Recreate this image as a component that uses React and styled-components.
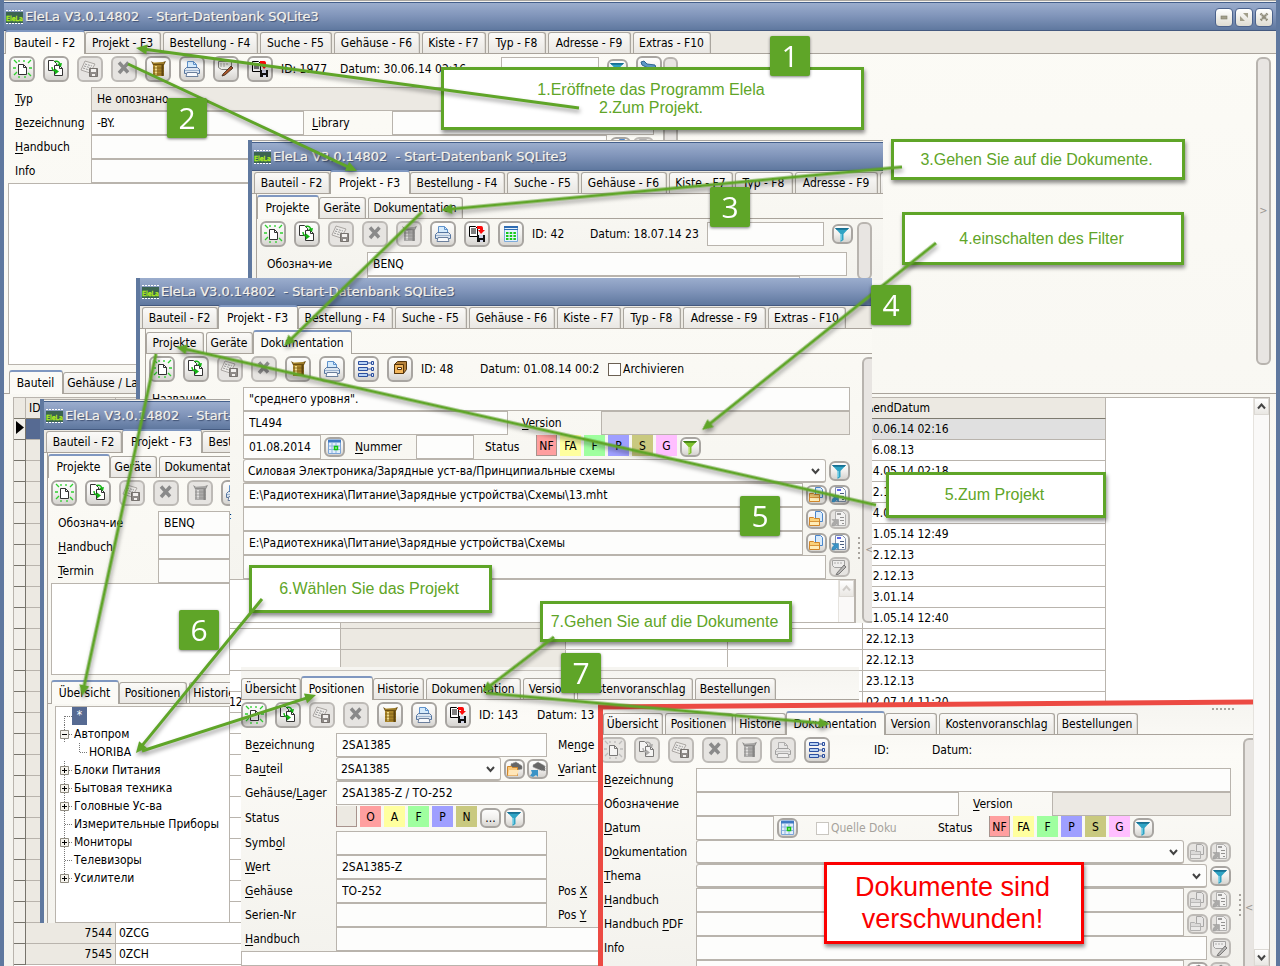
import React, { useId } from "react";
import styled, { createGlobalStyle, css } from "styled-components";

const UI = `"DejaVu Sans Condensed", "DejaVu Sans", "Noto Sans", sans-serif`;
const LINE = "#b9b4ad";
const GREEN = "#5fa528";

const Global = createGlobalStyle`
  *, *::before, *::after { box-sizing: border-box; }
  body { margin: 0; background: #ece9e2; }
  button, input, select, textarea { font: inherit; color: inherit; margin: 0; }
`;

/* ---------- window chrome ---------- */

const Canvas = styled.div`
  position: relative;
  width: 100%;
  height: 100vh;
  min-height: 400px;
  overflow: hidden;
  font: 12px/16px ${UI};
  color: #000;
`;

const Frame = styled.section`
  display: flex;
  flex-direction: column;
  overflow: hidden;
  isolation: isolate;
  border-left: 4px solid #5f789f;
  background: linear-gradient(#fcfbf6, #f4f3ee);
  ${(p) =>
    p.$base
      ? css`
          height: 100%;
          border-right: 4px solid #5f789f;
        `
      : css`
          position: absolute;
          left: ${p.$x}px;
          top: ${p.$y}px;
          width: ${p.$w}px;
          height: ${p.$h}px;
        `}
`;

const TopEdge = styled.div`
  flex: none;
  height: 3px;
  margin-left: -4px;
  margin-right: -4px;
  background: linear-gradient(#a9a6a1 1px, #f4f2ee 1px, #f4f2ee 2px, #445f8b 2px);
`;

const TitleBar = styled.header`
  flex: none;
  display: flex;
  align-items: center;
  gap: 2px;
  height: 28px;
  margin: 0 -4px;
  padding: 1px 7px 0 6px;
  border-bottom: 1px solid #44597f;
  background: linear-gradient(#9badcd, #8296bb 45%, #5f789f);
`;

const TitleText = styled.h1`
  flex: 1;
  margin: 0;
  font: 13px/16px "DejaVu Sans", sans-serif;
  white-space: pre;
  color: #f3f1ea;
  text-shadow: 1px 1px 1px #3c4f73, 0 0 1px #f3f1ea;
`;

const CaptionButton = styled.button`
  width: 18px;
  height: 19px;
  margin-left: 0;
  padding: 0;
  display: grid;
  place-items: center;
  border: 1px solid #4b628c;
  border-radius: 4px;
  background: linear-gradient(#fff, #dedcd2);
`;

const LogoMark = styled.svg`
  flex: none;
`;

function Logo() {
  const dots = [0, 3, 6, 9, 12, 15];
  return (
    <LogoMark width="17" height="15" viewBox="0 0 17 15" role="img" aria-label="EleLa">
      <rect x="0" y="2" width="17" height="11" fill="#3b6450" />
      {dots.map((d) => (
        <g key={d} fill="#fff">
          <rect x={d} y="0" width="2" height="1" />
          <rect x={d} y="13" width="2" height="1" />
        </g>
      ))}
      <text x="8.500" y="10.500" textAnchor="middle" fontSize="7" fontFamily="DejaVu Sans Condensed, DejaVu Sans, sans-serif" stroke="#b6f51c" strokeWidth=".3" fill="#b6f51c">
        EleLa
      </text>
    </LogoMark>
  );
}

function Title({ controls }) {
  return (
    <TitleBar>
      <Logo />
      <TitleText>{"EleLa V3.0.14802  - Start-Datenbank SQLite3"}</TitleText>
      {controls && (
        <>
          <CaptionButton aria-label="Minimieren">
            <svg width="8" height="8"><rect x="1" y="3" width="6" height="3" fill="#a29f8b" stroke="#7f7c6a" strokeWidth=".6" /></svg>
          </CaptionButton>
          <CaptionButton aria-label="Maximieren">
            <svg width="10" height="10"><path d="M4 1h5v5zM1 4v5h5z" fill="#a29f8b" /></svg>
          </CaptionButton>
          <CaptionButton aria-label="Schließen">
            <svg width="10" height="10"><path d="M1.500 1.500l7 7M8.500 1.500l-7 7" stroke="#8f8c7b" strokeWidth="2.400" strokeDasharray="1.600 .4" /></svg>
          </CaptionButton>
        </>
      )}
    </TitleBar>
  );
}

/* ---------- tabs ---------- */

const TabBar = styled.nav`
  flex: none;
  display: flex;
  align-items: flex-end;
  gap: 2px;
  height: ${(p) => (p.$lower ? 29 : p.$sub ? 25 : 23)}px;
  padding-left: ${(p) => p.$pad || 0}px;
  border-bottom: 1px solid #a9a39b;
  background: ${(p) => (p.$plain ? "transparent" : "#ece9e2")};
`;

const Tab = styled.button`
  flex: none;
  width: ${(p) => p.$w}px;
  height: 21px;
  padding: 0 1px 0 0;
  border: 1px solid #aaa69f;
  border-bottom: 0;
  border-radius: 3px 3px 0 0;
  box-shadow: inset -1px 0 0 #dedbd5;
  background: linear-gradient(#fbfaf8, #e9e7e3);
  white-space: nowrap;
  font-size: 12px;
  line-height: 19px;
  ${(p) =>
    p.$active &&
    css`
      width: ${p.$w + 4}px;
      height: 24px;
      margin: 0 -2px -1px;
      border-top: 2px solid #7f97c0;
      background: #fbfaf6;
      line-height: 20px;
      box-shadow: none;
      z-index: 1;
    `}
`;

const MAIN_TABS = [
  ["Bauteil - F2", 76],
  ["Projekt - F3", 76],
  ["Bestellung - F4", 95],
  ["Suche - F5", 72],
  ["Gehäuse - F6", 86],
  ["Kiste - F7", 64],
  ["Typ - F8", 58],
  ["Adresse - F9", 83],
  ["Extras - F10", 78],
];
const PROJECT_TABS = [["Projekte", 58], ["Geräte", 47], ["Dokumentation", 95]];
const DETAIL_TABS = [
  ["Übersicht", 60],
  ["Positionen", 68],
  ["Historie", 51],
  ["Dokumentation", 95],
  ["Version", 52],
  ["Kostenvoranschlag", 116],
  ["Bestellungen", 81],
];

function Tabs({ items, active, ...rest }) {
  return (
    <TabBar {...rest}>
      {items.map(([name, w]) => (
        <Tab key={name} $w={w} $active={name === active}>{name}</Tab>
      ))}
    </TabBar>
  );
}

/* ---------- icons ---------- */

const Svg = styled.svg`
  display: block;
  flex: none;
  ${(p) => p.$off && css`filter: grayscale(1); opacity: 0.6;`}
`;
const Big = ({ off, children }) => <Svg $off={off} width="26" height="26" viewBox="0 0 26 26" fill="none" aria-hidden="true">{children}</Svg>;
const Small = ({ off, children }) => <Svg $off={off} width="21" height="20" viewBox="0 0 21 20" fill="none" aria-hidden="true">{children}</Svg>;

const page = "h5l3 3v7h-8z";
const ICONS = {
  new: (off) => (
    <Big off={off}>
      <path d="M5 4l3 3M10 4v2M15 4v2M19 7l3-3M20 12h3M4 12h3M5 19l3-3M10 20v2M16 20v2M19 17l3 3" stroke="#2fd02f" strokeWidth="1.300" />
      <path d="M9.500 8.500h5l3 3v7h-8z" fill="#fff" stroke="#333" /><path d="M14.500 8.500v3h3" stroke="#333" />
    </Big>
  ),
  copy: (off) => (
    <Big off={off}>
      <path d={`M5.500 4.500${page}`} fill="#fff" stroke="#333" />
      <path d={`M11.500 9.500${page}`} fill="#fff" stroke="#333" /><path d="M16.500 9.500v3h3" stroke="#333" />
      <path d="M11.500 5.500c4-1 5 1 6 4" stroke="#12b312" strokeWidth="1.400" /><path d="M14 8l4 3 1-4z" fill="#12b312" />
      <path d="M9 11c0 3 1 4 4 4" stroke="#12b312" strokeWidth="1.400" /><path d="M12 12.500l4 3-4 3z" fill="#12b312" />
    </Big>
  ),
  save: () => (
    <Big>
      <path d="M8 5l10 3-5 9-9-3z" fill="#eceae7" stroke="#aaa6a2" />
      <path d="M8 8l7 2M7 10l7 2M6 12l6 2" stroke="#999" strokeDasharray="2 1" />
      <path d="M12.500 12.500h8v8h-8z" fill="#8e8a87" stroke="#77736f" /><path d="M14 13h5v3h-5zM15 18h3v2h-3z" fill="#f3f1ef" />
    </Big>
  ),
  remove: () => (
    <Big><path d="M8 6.500l9 10M17.500 6.500L8 17" stroke="#8a8a8a" strokeWidth="3.400" /></Big>
  ),
  trash: (off) => (
    <Big off={off}>
      <path d="M8 9h11v11H8z" fill="#a8842a" /><path d="M6 5l3 2 9-1 3-1-2 4H8z" fill="#6b4f10" /><path d="M8 7h11" stroke="#caa640" />
      <path d="M11 10v9" stroke="#f1db8a" strokeWidth="2" /><path d="M8 12h11M8 15h11M8 18h11" stroke="#7a5c14" strokeWidth=".8" /><path d="M17.500 9v11" stroke="#5e4510" strokeWidth="2" />
    </Big>
  ),
  print: (off) => (
    <Big off={off}>
      <path d="M8.500 5.500h6l3 3v5h-9z" fill="#d6ebfc" stroke="#5f92cc" /><path d="M14.500 5.500v3h3" stroke="#5f92cc" />
      <path d="M5.500 13.500l2-2h11l2 2v4h-15z" fill="#dde6f0" stroke="#5676a0" /><path d="M8 16.500h10l1 4H7z" fill="#f7f9fc" stroke="#6b7f9c" />
      <path d="M6 14.500h14" stroke="#9db4d0" />
    </Big>
  ),
  edit: (off) => (
    <Big off={off}>
      <path d="M5.500 5.500h13v8h-10l-3-2z" fill="#eef0ea" stroke="#7d7d78" /><path d="M7 8h8M7 10h6" stroke="#a8a8a0" strokeDasharray="2 1" />
      <path d="M10 18l8-8 2 2-8 7-3 1z" fill="#a8562c" stroke="#3a2414" strokeWidth=".8" />
    </Big>
  ),
  export: (off) => (
    <Big off={off}>
      <path d="M5.500 5.500h6l2 2v8h-8z" fill="#fff" stroke="#000" /><path d="M7 8h5M7 10h5M7 12h5" stroke="#000" />
      <path d="M13 5h4c2 0 2 1 2 4h2l-4 4-3-4h2V8h-3z" fill="#fb0a0a" />
      <path d="M13 14h8v7h-8z" fill="#111" /><path d="M15 14h4v3h-4zM16 19h3v2h-3z" fill="#cfd3e8" />
    </Big>
  ),
  table: () => (
    <Big>
      <path d="M6.500 5.500h13v15h-13z" fill="#e6f3fd" stroke="#7eabdb" /><path d="M6 5h14v2H6zM6 8h14v1H6z" fill="#2f6cb3" />
      <path d="M8 12h10M8 15h10M8 18h10" stroke="#16c916" strokeWidth="2" strokeDasharray="2.500 1.200" />
    </Big>
  ),
  tree: () => (
    <Big>
      {[5, 11, 17].map((y) => (
        <g key={y} stroke="#2c4f9e"><path d={`M5.500 ${y}.500h9v3h-9z`} fill="#b9d3f4" /><path d={`M15 ${y + 2}h4`} /><path d={`M18.500 ${y}.500h2v3h-2z`} fill="#dce9fa" /></g>
      ))}
    </Big>
  ),
  drawer: () => (
    <Big>
      <path d="M7.500 8.500l3-3h9v8l-3 4h-9z" fill="#b5813a" stroke="#55350c" /><path d="M7.500 8.500h9v9h-9z" fill="#f2b65c" stroke="#55350c" />
      <path d="M10.500 11.500h4v2h-4z" fill="#fff" stroke="#55350c" />
    </Big>
  ),
  chip: () => (
    <Big><path d="M5 6l3-1 3 3 8 1 1 3-8 0-6-3z" fill="#5c97c4" stroke="#2e658f" /></Big>
  ),
  funnel: () => (
    <Small>
      <path d="M3 4h14l-5.500 6v6l-3 2v-8z" fill="#2fa3c4" /><path d="M3 4h14l-1.500 1.800h-11z" fill="#176f92" /><path d="M9 10v6" stroke="#8fdcf0" strokeWidth="1.300" />
    </Small>
  ),
  funnelOn: () => (
    <Small>
      <path d="M3 4h14l-5.500 6v6l-3 2v-8z" fill="#7fc22e" /><path d="M3 4h14l-1.500 1.800h-11z" fill="#3f7d14" /><path d="M9 10v6" stroke="#d3f09a" strokeWidth="1.300" />
    </Small>
  ),
  calendar: () => (
    <Small>
      <path d="M4.500 4.500h12v12h-12z" fill="#e3effc" stroke="#7ba5d8" /><path d="M4 2.500h13v3H4z" fill="#3f79c4" />
      <path d="M8 6v10M12 6v10M5 9h11M5 12.500h11" stroke="#8fb3df" /><path d="M10.500 9.500h3v3h-3z" fill="#c9f7c9" stroke="#12c412" strokeWidth="1.500" />
    </Small>
  ),
  folder: (off) => (
    <Small off={off}>
      <path d="M9.500 2.500h5l2 2v8h-7z" fill="#d9ebfb" stroke="#4a86cb" />
      <path d="M3.500 8.500h4l1 1h5v7h-10z" fill="#fbd27a" stroke="#d0862a" /><path d="M4 12.500h9" stroke="#d0862a" strokeWidth=".8" /><path d="M4 13h9v3H4z" fill="#ffedb8" />
    </Small>
  ),
  link: (off) => (
    <Small off={off}>
      <path d="M6.500 2.500h7l3 3v11h-10z" fill="#fbfcfe" stroke="#8190ab" /><path d="M8 5h4" stroke="#2a35e0" strokeWidth="1.500" /><path d="M11 8.500h4M11 11.500h4M13 14.500h2" stroke="#4b5f80" />
      <path d="M2.500 17l1-3 1.500-1.500-2-2h6.500v6l-2-1.500-2 2z" fill="#3b93c6" stroke="#27719f" strokeWidth=".5" />
    </Small>
  ),
  note: () => (
    <Small off>
      <path d="M3.500 3.500h12v7h-10l-2-2z" fill="#f4f4f0" stroke="#777" /><path d="M5 6h8" stroke="#888" strokeDasharray="2 1" />
      <path d="M8 16l7-8 2 2-7 7-3 1z" fill="#999" stroke="#222" strokeWidth=".9" />
    </Small>
  ),
  partFolder: () => (
    <Small>
      <path d="M7 5l5-2 6 4v3l-5 1-6-3z" fill="#666" stroke="#888" strokeDasharray="1 1" />
      <path d="M3.500 7.500h4l1 1h5v8h-10z" fill="#fbc878" stroke="#d0862a" /><path d="M5 11h10l-2 5.500H4z" fill="#ffe6b8" />
    </Small>
  ),
  partLink: () => (
    <Small>
      <path d="M6 6l5-3 7 4v5l-5-1-7-3z" fill="#666" stroke="#999" strokeDasharray="1 1" />
      <path d="M3 17l2-3-1-3h7v7l-2-2-3 2z" fill="#3b93c6" />
    </Small>
  ),
};

/* ---------- controls ---------- */

const bevel = css`
  flex: none;
  display: grid;
  place-items: center;
  padding: 0;
  border: 2px solid ${(p) => (p.disabled ? "#bdbab6" : "#a8a5a1")};
  background: ${(p) => (p.disabled ? "#e6e4e1" : "linear-gradient(#fdfdfc, #f1f0ee 50%, #d6d4d0)")};
  overflow: hidden;
  & > svg { margin: -2px; }
`;
const ToolButton = styled.button`
  ${bevel}
  width: 26px;
  height: 26px;
  border-radius: 6px;
`;
const MiniButton = styled.button`
  ${bevel}
  width: 21px;
  height: 20px;
  border-radius: 6px;
  line-height: 10px;
`;

const Tool = ({ icon, off, label }) => (
  <ToolButton disabled={off} aria-label={label || icon}>{ICONS[icon](off)}</ToolButton>
);
const Mini = ({ icon, off, label }) => (
  <MiniButton disabled={off} aria-label={label || icon}>{ICONS[icon](off)}</MiniButton>
);

const Toolbar = styled.div`
  flex: none;
  display: flex;
  align-items: center;
  gap: 8px;
  height: 26px;
  margin: 2px 0 5px;
  padding-left: ${(p) => p.$pad || 0}px;
`;

const Info = styled.span`
  flex: none;
  width: ${(p) => p.$w}px;
  margin-right: -8px;
  padding-left: ${(p) => p.$pad || 0}px;
  overflow: hidden;
  white-space: nowrap;
`;

const Row = styled.div`
  flex: none;
  display: flex;
  align-items: center;
  height: ${(p) => p.$h || 24}px;
`;

const Label = styled.label`
  flex: none;
  width: ${(p) => p.$w}px;
  padding-left: ${(p) => p.$pad || 0}px;
  white-space: nowrap;
  ${(p) => p.$off && css`color: #a5a29c;`}
  u { text-underline-offset: 2px; }
`;

const Field = styled.input`
  height: 24px;
  min-width: 0;
  padding: 0 5px;
  border: 1px solid ${LINE};
  border-radius: 0;
  background: #fdfdfc;
  outline: 0;
  ${(p) => (p.$w ? css`flex: none; width: ${p.$w}px;` : css`flex: 1;`)}
  &:read-only { background: #ece9e3; }
`;

const ComboBox = styled.span`
  position: relative;
  display: flex;
  height: 24px;
  ${(p) => (p.$w ? css`flex: none; width: ${p.$w}px;` : css`flex: 1;`)}
  select {
    appearance: none;
    width: 100%;
    padding: 0 20px 0 4px;
    border: 1px solid ${LINE};
    border-bottom-width: 2px;
    border-radius: 3px;
    background: #fdfdfc;
    opacity: 1;
  }
  svg { position: absolute; right: 6px; top: 9px; pointer-events: none; }
`;

const Check = styled.input`
  appearance: none;
  width: 13px;
  height: 13px;
  margin: 0 2px 0 0;
  vertical-align: -3px;
  border: 1px solid ${(p) => (p.disabled ? "#c9c6c0" : "#6b6053")};
  background: #fff;
`;

const Actions = styled.span`
  flex: none;
  display: flex;
  gap: 2px;
  margin-left: 3px;
`;

const CHIP_COLOURS = {
  NF: "#ff9f9f", O: "#ff9f9f", FA: "#ffff9f", A: "#ffff9f", F: "#9fff9f",
  P: "#9f9fff", S: "#c9c97f", N: "#c9c97f", G: "#ffbfff",
};
const Chip = styled.button`
  flex: none;
  width: 21px;
  height: 21px;
  margin: -3px 3px 0 0;
  padding: 0;
  border: 0;
  background: ${(p) => CHIP_COLOURS[p.$code] || "#ece9e2"};
  line-height: 18px;
  ${(p) => p.$down && css`box-shadow: inset 1px -1px 0 #a8938d, inset -1px 0 0 #a8938d;`}
`;

function Key({ children }) {
  const [before, after] = children.split("&");
  if (after === undefined) return before;
  return <>{before}<u>{after[0]}</u>{after.slice(1)}</>;
}

function Named({ text, w, pad, children }) {
  const id = useId();
  return (
    <>
      <Label htmlFor={id} $w={w} $pad={pad}><Key>{text}</Key></Label>
      {React.cloneElement(children, { id })}
    </>
  );
}

function Combo({ id, w, value = "" }) {
  return (
    <ComboBox $w={w}>
      <select id={id} defaultValue={value}><option>{value}</option></select>
      <svg width="9" height="7"><path d="M1 1l3.500 4L8 1" fill="none" stroke="#444" strokeWidth="2" /></svg>
    </ComboBox>
  );
}

const Memo = styled.textarea`
  display: block;
  flex: ${(p) => (p.$h ? "none" : "1")};
  height: ${(p) => (p.$h ? p.$h + "px" : "auto")};
  margin-left: ${(p) => p.$left || 0}px;
  resize: none;
  border: 1px solid ${LINE};
  background: #fff;
  outline: 0;
`;

const Splitter = styled.div`
  flex: none;
  display: grid;
  place-items: center;
  width: 15px;
  margin-top: 3px;
  padding-top: ${(p) => p.$drop || 0}px;
  border: 2px solid #b8b4af;
  border-radius: 6px;
  background: #e8e5e2;
  color: #9c9893;
  font-size: 11px;
`;

const Column = styled.div`
  display: flex;
  flex-direction: column;
  min-width: 0;
  ${(p) => (p.$w ? css`flex: none; width: ${p.$w}px;` : css`flex: 1;`)}
`;

const Split = styled.div`
  display: flex;
  min-height: 0;
  ${(p) => (p.$h ? css`flex: none; height: ${p.$h}px;` : css`flex: 1;`)}
`;

const Grip = styled.div`
  flex: none;
  align-self: center;
  width: 2px;
  height: 23px;
  margin: ${(p) => p.$m};
  background: repeating-linear-gradient(#a8a49e 0 2px, transparent 2px 5px);
`;

/* ---------- part grid of the main window ---------- */

const GridArea = styled.div`
  flex: 1;
  display: flex;
  min-height: 0;
  margin: 3px 6px 0 9px;
  border-left: 1px solid ${LINE};
  border-top: 1px solid ${LINE};
  background: #fff;
  overflow: hidden;
`;

const GridBody = styled.div`
  flex: 1;
  min-width: 0;
  overflow: hidden;
`;

const Grid = styled.table`
  table-layout: fixed;
  width: 1092px;
  border-collapse: separate;
  border-spacing: 0;
  th, td {
    height: 21px;
    padding: 0 3px;
    border-right: 1px solid ${LINE};
    border-bottom: 1px solid ${LINE};
    text-align: left;
    font-weight: normal;
    white-space: nowrap;
    overflow: hidden;
  }
  th { background: #ece9e2; border-bottom-color: #7e7b70; }
  td:first-child { background: #f1efea; border-bottom-color: #77746c; border-right-color: #77746c; padding: 0 2px; }
  td:nth-child(2), td:nth-child(4) { background: #ece9e2; }
  td:nth-child(2) { text-align: right; }
  tr[aria-selected="true"] td:not(:first-child) { background: #e0e0e0; }
  tr[aria-selected="true"] td:nth-child(2) { background: #566a92; }
`;

const Indent = styled.span`
  padding-left: 110px;
`;

const DATES = [
  "30.06.14 02:16", "26.08.13", "24.05.14 02:18", "22.12.13", "24.05.14 02:18", "21.05.14 12:49",
  "22.12.13", "22.12.13", "23.01.14", "21.05.14 12:40", "22.12.13", "22.12.13", "23.12.13", "02.07.14 11:20",
];
const NAMES = { 24: ["7544", "0ZCG"], 25: ["7545", "0ZCH"] };

function PartGrid() {
  return (
    <Grid>
      <colgroup>
        {[12, 90, 225, 225, 162, 135, 243].map((w, i) => <col key={i} width={w} />)}
      </colgroup>
      <thead>
        <tr><th /><th>ID</th><th /><th /><th /><th /><th>AendDatum</th></tr>
      </thead>
      <tbody>
        {Array.from({ length: 26 }, (_, i) => (
          <tr key={i} aria-selected={i === 0}>
            <td>{i === 0 && <svg width="8" height="13"><path d="M0 0v13l8-6.500z" /></svg>}</td>
            <td>{NAMES[i]?.[0]}</td>
            <td>{i === 13 ? <Indent>12</Indent> : NAMES[i]?.[1]}</td>
            <td /><td /><td />
            <td>{DATES[i]}</td>
          </tr>
        ))}
      </tbody>
    </Grid>
  );
}

const ScrollTrack = styled.div`
  flex: none;
  display: flex;
  flex-direction: column;
  justify-content: space-between;
  width: 17px;
  border-left: 1px solid #e6e3de;
  border-right: 1px solid ${LINE};
  background: #faf9f8;
`;
const ScrollButton = styled.button`
  display: grid;
  place-items: center;
  width: 100%;
  height: 17px;
  padding: 0;
  border: 1px solid #dcd9d4;
  background: linear-gradient(#fff, #e9e7e3);
`;
const Chevron = ({ up, pale }) => (
  <svg width="9" height="7"><path d={up ? "M1 5.500l3.500-4 3.500 4" : "M1 1.500l3.500 4 3.500-4"} fill="none" stroke={pale ? "#cfccc8" : "#444"} strokeWidth="2" /></svg>
);

function MainWindow() {
  return (
    <Frame $base>
      <TopEdge />
      <Title controls />
      <Tabs items={MAIN_TABS} active="Bauteil - F2" $pad={3} />
      <Split $h={311}>
        <Column $w={650}>
          <Toolbar $pad={5}>
            <Tool icon="new" /><Tool icon="copy" /><Tool icon="save" off /><Tool icon="remove" off />
            <Tool icon="trash" /><Tool icon="print" /><Tool icon="edit" /><Tool icon="export" />
            <Info $w={59}>ID: 1977</Info>
            <Info $w={161}>Datum: 30.06.14 02:16</Info>
            <Field $w={98} aria-label="Suche" />
            <Mini icon="funnel" /><Tool icon="chip" />
          </Toolbar>
          <Row><Named text="&Typ" w={87} pad={11}><Field readOnly defaultValue="Не опознано" /></Named></Row>
          <Row>
            <Named text="&Bezeichnung" w={87} pad={11}><Field $w={213} defaultValue="-BY." /></Named>
            <Named text="&Library" w={88} pad={8}><Field /></Named>
          </Row>
          <Row>
            <Named text="&Handbuch" w={87} pad={11}><Field /></Named>
            <Actions><Mini icon="folder" /><Mini icon="link" off /></Actions>
          </Row>
          <Row><Named text="Info" w={87} pad={11}><Field /></Named></Row>
          <Memo $left={4} aria-label="Beschreibung" />
        </Column>
        <Grip $m="0 3px 0 4px" />
        <Splitter />
        <Column />
        <Splitter>&gt;</Splitter>
        <Column $w={5} />
      </Split>
      <TabBar $plain $lower $pad={7}>
        <Tab $w={50} $active>Bauteil</Tab>
        <Tab $w={98}>Gehäuse / Lager</Tab>
      </TabBar>
      <GridArea>
        <GridBody><PartGrid /></GridBody>
        <ScrollTrack>
          <ScrollButton aria-label="Nach oben"><Chevron up /></ScrollButton>
          <ScrollButton aria-label="Nach unten"><Chevron /></ScrollButton>
        </ScrollTrack>
      </GridArea>
    </Frame>
  );
}

/* ---------- project windows ---------- */

const Inner = styled.div`
  flex: 1;
  display: flex;
  flex-direction: column;
  min-height: 0;
  margin-left: ${(p) => p.$left}px;
  border-left: 1px solid #a9a39b;
`;

function ProjectWindow() {
  return (
    <Frame $x={248} $y={140} $w={635} $h={140}>
      <TopEdge />
      <Title />
      <Tabs items={MAIN_TABS} active="Projekt - F3" $pad={2} />
      <Inner $left={4}>
        <Tabs items={PROJECT_TABS} active="Projekte" $plain $sub $pad={2} />
        <Split>
          <Column $w={590}>
            <Toolbar $pad={3}>
              <Tool icon="new" /><Tool icon="copy" /><Tool icon="save" off /><Tool icon="remove" off />
              <Tool icon="trash" off /><Tool icon="print" /><Tool icon="export" /><Tool icon="table" />
              <Info $w={58}>ID: 42</Info>
              <Info $w={117}>Datum: 18.07.14 23</Info>
              <Field $w={117} aria-label="Suche" />
              <Mini icon="funnel" />
            </Toolbar>
            <Row><Named text="Обознач-ие" w={110} pad={10}><Field defaultValue="BENQ" /></Named></Row>
            <Row><Named text="&Handbuch" w={110} pad={10}><Field /></Named><Actions><Mini icon="folder" /><Mini icon="link" off /></Actions></Row>
          </Column>
          <Column $w={10} />
          <Splitter />
        </Split>
      </Inner>
    </Frame>
  );
}

const ScrollMemo = styled.div`
  flex: 1;
  display: flex;
  margin-right: -6px;
  border: 1px solid ${LINE};
  background: #fff;
  textarea { flex: 1; border: 0; }
`;

const StatusChips = ({ codes, down }) => codes.map((c) => <Chip key={c} $code={c} $down={c === down}>{c}</Chip>);
const DOC_CODES = ["NF", "FA", "F", "P", "S", "G"];

function DocumentWindow() {
  return (
    <Frame $x={136} $y={278} $w={736} $h={345}>
      <Title />
      <Tabs items={MAIN_TABS} active="Projekt - F3" $pad={2} />
      <Inner $left={5}>
        <Tabs items={PROJECT_TABS} active="Dokumentation" $plain $sub />
        <Split>
          <Column $w={704}>
            <Toolbar $pad={3}>
              <Tool icon="new" /><Tool icon="copy" /><Tool icon="save" off /><Tool icon="remove" off />
              <Tool icon="trash" /><Tool icon="print" /><Tool icon="tree" /><Tool icon="drawer" />
              <Info $w={59}>ID: 48</Info>
              <Info $w={128}>Datum: 01.08.14 00:2</Info>
              <Label><Check type="checkbox" />Archivieren</Label>
            </Toolbar>
            <Row><Named text="Название" w={97} pad={6}><Field defaultValue={'"среднего уровня".'} /></Named></Row>
            <Row>
              <Named text="Обозначение" w={97} pad={6}><Field $w={265} defaultValue="TL494" /></Named>
              <Named text="&Version" w={93} pad={14}><Field readOnly /></Named>
            </Row>
            <Row>
              <Named text="&Datum" w={97} pad={6}><Field $w={78} defaultValue="01.08.2014" /></Named>
              <Actions><Mini icon="calendar" /></Actions>
              <Named text="&Nummer" w={71} pad={10}><Field $w={58} /></Named>
              <Label as="span" $w={62} $pad={11}>Status</Label>
              <StatusChips codes={DOC_CODES} down="NF" />
              <Mini icon="funnelOn" />
            </Row>
            <Row>
              <Named text="&Thema" w={97} pad={6}><Combo value="Силовая Электроника/Зарядные уст-ва/Принципиальные схемы" /></Named>
              <Actions><Mini icon="funnel" /></Actions>
            </Row>
            <Row>
              <Named text="&Handbuch" w={97} pad={6}><Field defaultValue="E:\Радиотехника\Питание\Зарядные устройства\Схемы\13.mht" /></Named>
              <Actions><Mini icon="folder" /><Mini icon="link" /></Actions>
            </Row>
            <Row>
              <Named text="Handbuch &PDF" w={97} pad={6}><Field /></Named>
              <Actions><Mini icon="folder" /><Mini icon="link" off /></Actions>
            </Row>
            <Row>
              <Named text="Verzeichnis" w={97} pad={6}><Field defaultValue="E:\Радиотехника\Питание\Зарядные устройства\Схемы" /></Named>
              <Actions><Mini icon="folder" /><Mini icon="link" /></Actions>
            </Row>
            <Row>
              <Named text="Info" w={97} pad={6}><Field /></Named>
              <Actions><Mini icon="note" off /></Actions>
            </Row>
            <ScrollMemo>
              <Memo aria-label="Notiz" />
              <ScrollTrack><ScrollButton aria-label="Nach oben"><Chevron up pale /></ScrollButton></ScrollTrack>
            </ScrollMemo>
          </Column>
          <Grip $m="120px 2px 0 8px" />
          <Splitter $drop={120}>&lt;</Splitter>
        </Split>
      </Inner>
    </Frame>
  );
}

/* ---------- project tree ---------- */

const TreeBox = styled.ul`
  flex: 1;
  margin: 2px 0 0 7px;
  padding: 0 0 0 4px;
  list-style: none;
  border: 1px solid ${LINE};
  background: #fff;
`;
const TreeItem = styled.li`
  display: flex;
  align-items: center;
  height: 18px;
  padding-left: ${(p) => (p.$deep ? 15 : 0)}px;
  white-space: nowrap;
  svg { flex: none; }
`;
const Selected = styled.span`
  width: 15px;
  height: 18px;
  margin-left: -2px;
  background: #566a92;
  color: #fff;
  text-align: center;
`;

function Branch({ kind, first, last }) {
  return (
    <svg width="14" height="18" aria-hidden="true">
      <path d={`M4.500 ${first ? 9 : 0}V${last ? 9 : 18}M5 9.500h8`} stroke="#777" strokeDasharray="1 1" />
      {kind && (
        <g fill="none" stroke="#8f8b80">
          <path d="M.5 5.500h8v8h-8z" fill="#f6f4ee" />
          <path d={kind === "+" ? "M2 9.500h5M4.500 7v5" : "M2 9.500h5"} stroke="#000" />
        </g>
      )}
    </svg>
  );
}

const TREE = [
  ["Автопром", "-"], ["HORIBA", "", true], ["Блоки Питания", "+"], ["Бытовая техника", "+"], ["Головные Ус-ва", "+"],
  ["Измерительные Приборы", ""], ["Мониторы", "+"], ["Телевизоры", ""], ["Усилители", "+"],
];

function TreeWindow() {
  return (
    <Frame $x={40} $y={399} $w={190} $h={524}>
      <TopEdge />
      <Title />
      <Tabs items={MAIN_TABS} active="Projekt - F3" $pad={2} />
      <Inner $left={3}>
        <Tabs items={PROJECT_TABS} active="Projekte" $plain $sub $pad={2} />
        <Toolbar $pad={3}>
          <Tool icon="new" /><Tool icon="copy" /><Tool icon="save" off /><Tool icon="remove" off />
          <Tool icon="trash" off /><Tool icon="print" />
        </Toolbar>
        <Row><Named text="Обознач-ие" w={110} pad={10}><Field defaultValue="BENQ" /></Named></Row>
        <Row><Named text="&Handbuch" w={110} pad={10}><Field /></Named></Row>
        <Row><Named text="&Termin" w={110} pad={10}><Field /></Named></Row>
        <Memo $h={92} $left={3} aria-label="Beschreibung" />
        <TabBar $plain $lower $pad={5}>
          <Tab $w={64} $active>Übersicht</Tab>
          <Tab $w={68}>Positionen</Tab>
          <Tab $w={51}>Historie</Tab>
        </TabBar>
        <TreeBox>
          <TreeItem><Branch first /><Selected>*</Selected></TreeItem>
          {TREE.map(([name, kind, deep], i) => (
            <TreeItem key={name} $deep={deep}>
              <Branch kind={kind} last={deep || i === TREE.length - 1} />{name}
            </TreeItem>
          ))}
        </TreeBox>
      </Inner>
    </Frame>
  );
}

/* ---------- detail panels ---------- */

const Panel = styled.section`
  position: absolute;
  left: ${(p) => p.$x}px;
  top: ${(p) => p.$y}px;
  right: ${(p) => p.$right}px;
  bottom: 0;
  display: flex;
  flex-direction: column;
  overflow: hidden;
  isolation: isolate;
  padding-top: ${(p) => p.$top}px;
  background: linear-gradient(#f6f5f1, #fcfbf7 50px, #f3f2ed);
  ${(p) =>
    p.$alert
      ? css`border-left: 5px solid #ec4a43;`
      : css`background: linear-gradient(#f6f5f1 3px, #c4c0ba 3px 4px, #f6f5f1 4px, #fcfbf7 50px, #f3f2ed);`}
`;

function PositionPanel() {
  return (
    <Panel $x={241} $y={667} $right={421} $top={10}>
      <Tabs items={DETAIL_TABS} active="Positionen" $plain />
      <Toolbar>
        <Tool icon="new" /><Tool icon="copy" /><Tool icon="save" off /><Tool icon="remove" off />
        <Tool icon="trash" /><Tool icon="print" /><Tool icon="export" />
        <Info $w={58}>ID: 143</Info>
        <Info $w={68}>Datum: 13</Info>
      </Toolbar>
      <Row>
        <Named text="B&ezeichnung" w={95} pad={4}><Field $w={211} defaultValue="2SA1385" /></Named>
        <Label as="span" $w={80} $pad={11}>Me<u>n</u>ge</Label>
      </Row>
      <Row>
        <Named text="Ba&uteil" w={95} pad={4}><Combo w={165} value="2SA1385" /></Named>
        <Actions><Mini icon="partFolder" /><Mini icon="partLink" /></Actions>
        <Label as="span" $w={80} $pad={10}><u>V</u>ariant</Label>
      </Row>
      <Row><Named text="Gehäuse/&Lager" w={95} pad={4}><Field defaultValue="2SA1385-Z / TO-252" /></Named></Row>
      <Row $h={26}>
        <Label as="span" $w={95} $pad={4}>Status</Label>
        <Chip $down aria-label="leer" />
        <StatusChips codes={["O", "A", "F", "P", "N"]} />
        <MiniButton>...</MiniButton>
        <Actions><Mini icon="funnel" /></Actions>
      </Row>
      <Row><Named text="Symb&ol" w={95} pad={4}><Field $w={211} /></Named></Row>
      <Row><Named text="&Wert" w={95} pad={4}><Field $w={211} defaultValue="2SA1385-Z" /></Named></Row>
      <Row>
        <Named text="&Gehäuse" w={95} pad={4}><Field $w={211} defaultValue="TO-252" /></Named>
        <Label as="span" $w={80} $pad={11}>Pos <u>X</u></Label>
      </Row>
      <Row>
        <Named text="Serien-Nr" w={95} pad={4}><Field $w={211} /></Named>
        <Label as="span" $w={80} $pad={11}>Pos <u>Y</u></Label>
      </Row>
      <Row><Named text="&Handbuch" w={95} pad={4}><Field /></Named></Row>
      <Memo aria-label="Notiz" />
    </Panel>
  );
}

const SplitDots = styled.div`
  position: absolute;
  top: 3px;
  right: 18px;
  width: 23px;
  height: 2px;
  background: repeating-linear-gradient(90deg, #a8a49e 0 2px, transparent 2px 4px);
`;

function DocumentPanel() {
  return (
    <Panel $alert $x={598} $y={705} $right={27} $top={7}>
      <SplitDots />
      <Tabs items={DETAIL_TABS} active="Dokumentation" $plain />
      <Split>
        <Column>
          <ShiftedTools>
            <Tool icon="new" off /><Tool icon="copy" off /><Tool icon="save" off /><Tool icon="remove" off />
            <Tool icon="trash" off /><Tool icon="print" off /><Tool icon="tree" />
            <Info $w={94} $pad={36}>ID:</Info>
            <Info $w={80}>Datum:</Info>
          </ShiftedTools>
          <Row><Named text="&Bezeichnung" w={93} pad={1}><Field /></Named></Row>
          <Row>
            <Named text="Обозначение" w={93} pad={1}><Field /></Named>
            <Named text="&Version" w={93} pad={14}><Field $w={179} readOnly /></Named>
          </Row>
          <Row>
            <Named text="&Datum" w={93} pad={1}><Field $w={78} /></Named>
            <Actions><Mini icon="calendar" /></Actions>
            <Label $w={140} $pad={18} $off><Check type="checkbox" disabled />Quelle Doku</Label>
            <Label as="span" $w={51}>Status</Label>
            <StatusChips codes={DOC_CODES} down="NF" />
            <Mini icon="funnel" />
          </Row>
          <Row><Named text="D&okumentation" w={93} pad={1}><Combo /></Named><Actions><Mini icon="folder" off /><Mini icon="link" off /></Actions></Row>
          <Row><Named text="&Thema" w={93} pad={1}><Combo /></Named><Actions><Mini icon="funnel" /></Actions></Row>
          <Row><Named text="&Handbuch" w={93} pad={1}><Field /></Named><Actions><Mini icon="folder" off /><Mini icon="link" off /></Actions></Row>
          <Row><Named text="Handbuch &PDF" w={93} pad={1}><Field /></Named><Actions><Mini icon="folder" off /><Mini icon="link" off /></Actions></Row>
          <Row><Named text="Info" w={93} pad={1}><Field /></Named><Actions><Mini icon="note" off /></Actions></Row>
          <Row><Field aria-label="Bild" as={IndentedField} /><Actions><Mini icon="partFolder" /><Mini icon="partLink" off /></Actions></Row>
        </Column>
        <Grip $m="110px 2px 0 8px" />
        <EdgeSplitter $drop={110}>&lt;</EdgeSplitter>
      </Split>
    </Panel>
  );
}

const IndentedField = styled.input`
  && { margin-left: 93px; }
`;
const ShiftedTools = styled(Toolbar)`
  margin-left: -3px;
`;
const EdgeSplitter = styled(Splitter)`
  width: 10px;
  border-right: 0;
  border-bottom: 0;
  border-radius: 6px 0 0 0;
`;

/* ---------- annotations ---------- */

const Callout = styled.p`
  position: absolute;
  left: ${(p) => p.$x}px;
  top: ${(p) => p.$y}px;
  width: ${(p) => p.$w}px;
  height: ${(p) => p.$h}px;
  display: grid;
  place-content: center;
  margin: 0;
  padding-right: 3px;
  border: 3px solid ${(p) => (p.$alert ? "#fb0000" : GREEN)};
  background: #fff;
  box-shadow: 1px 3px 4px rgba(0, 0, 0, 0.45);
  color: ${(p) => (p.$alert ? "#fb0000" : GREEN)};
  font: ${(p) => (p.$alert ? "27px/32px" : "16px/18px")} "Liberation Sans", Arial, sans-serif;
  text-align: center;
  white-space: pre;
`;

const Badge = styled.span`
  position: absolute;
  left: ${(p) => p.$x}px;
  top: ${(p) => p.$y}px;
  width: 40px;
  height: 40px;
  border-radius: 2px;
  background: ${GREEN};
  box-shadow: 0 1px 3px rgba(0, 0, 0, 0.5);
  color: #fff;
  font: 30px/39px "Open Sans", "Noto Sans", sans-serif;
  text-align: center;
`;

const Overlay = styled.svg`
  position: absolute;
  inset: 0;
  width: 100%;
  height: 100%;
  pointer-events: none;
`;
const Arrows = styled.g`
  filter: drop-shadow(1px 3px 2px rgba(0, 0, 0, 0.4));
`;

const ARROWS = [
  [579, 108, 136, 48], [128, 64, 357, 171], [902, 167, 441, 210], [936, 243, 702, 430],
  [876, 505, 176, 347], [422, 212, 284, 346], [156, 354, 82, 696], [262, 599, 136, 753],
  [142, 751, 316, 695], [554, 637, 482, 692], [486, 693, 830, 724],
];

function Arrow({ points: [x1, y1, x2, y2] }) {
  const angle = (Math.atan2(y2 - y1, x2 - x1) * 180) / Math.PI;
  const length = Math.hypot(x2 - x1, y2 - y1);
  return (
    <g transform={`translate(${x1} ${y1}) rotate(${angle})`}>
      <path d={`M0 0H${length - 7}`} stroke={GREEN} strokeWidth="3" />
      <path d={`M${length} 0l-11-5v10z`} fill={GREEN} />
    </g>
  );
}

const CALLOUTS = [
  [441, 67, 423, 63, "1.Eröffnete das Programm Elela\n2.Zum Projekt."],
  [891, 139, 294, 41, "3.Gehen Sie auf die Dokumente."],
  [902, 212, 282, 53, "4.einschalten des Filter"],
  [886, 472, 220, 46, "5.Zum Projekt"],
  [249, 565, 243, 48, "6.Wählen Sie das Projekt"],
  [540, 601, 252, 41, "7.Gehen Sie auf die Dokumente"],
];
const BADGES = [[770, 36], [167, 98], [710, 187], [871, 285], [740, 496], [179, 610], [561, 653]];

export default function App() {
  return (
    <Canvas>
      <Global />
      <MainWindow />
      <ProjectWindow />
      <DocumentWindow />
      <TreeWindow />
      <PositionPanel />
      <DocumentPanel />
      {CALLOUTS.map(([x, y, w, h, text]) => (
        <Callout key={text} $x={x} $y={y} $w={w} $h={h}>{text}</Callout>
      ))}
      <Callout $alert $x={824} $y={862} $w={260} $h={82}>{"Dokumente sind\nverschwunden!"}</Callout>
      <Overlay aria-hidden="true">
        <path d="M598 707L1253 702" stroke="#ec4a43" strokeWidth="5" />
        <Arrows>
          {ARROWS.map((a) => <Arrow key={a.join()} points={a} />)}
        </Arrows>
      </Overlay>
      {BADGES.map(([x, y], i) => (
        <Badge key={i} $x={x} $y={y}>{i + 1}</Badge>
      ))}
    </Canvas>
  );
}
